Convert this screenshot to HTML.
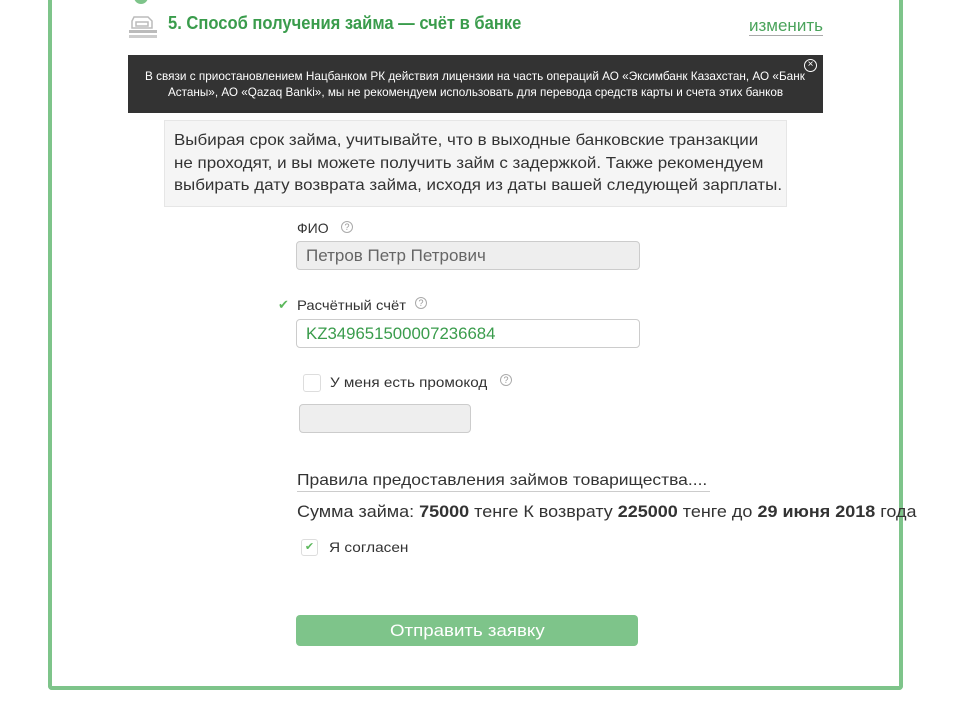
<!DOCTYPE html>
<html><head><meta charset="utf-8"><style>
*{margin:0;padding:0;box-sizing:border-box}
body{width:955px;height:717px;background:#fff;position:relative;overflow:hidden;font-family:"Liberation Sans","DejaVu Sans",sans-serif;color:#333}
.a{position:absolute;white-space:nowrap}
.sx{display:inline-block;transform-origin:0 50%}
.frame{position:absolute;left:48px;top:-10px;width:855px;height:700px;border:4px solid #7ec48a;border-top:none;border-radius:0 0 4px 4px}
.inp{position:absolute;border:1px solid #ccc;border-radius:4px;height:29px;padding-left:9px;line-height:27px}
.q{position:absolute;width:12px;height:12px;border:1px solid #aaa;border-radius:50%;font-size:9px;line-height:10px;text-align:center;color:#999}
</style></head><body>
<div class="frame"></div>
<div class="a" style="left:134px;top:-6px;width:14px;height:10px;background:#7ec48a;border-radius:0 0 7px 7px"></div>
<svg class="a" style="left:128px;top:14px" width="30" height="24" viewBox="0 0 30 24"><path d="M6 3h14l4 4v7H4V7z M8 8h12v4H8z" fill="none" stroke="#bbb" stroke-width="1.5"/><rect x="1" y="16" width="28" height="3" fill="#bbb"/><rect x="1" y="21" width="28" height="3" fill="#ccc"/></svg>
<div class="a" style="left:168px;top:13px;font-size:18px;font-weight:bold;color:#3a9c4c"><span class="sx" style="transform:scaleX(0.92)">5. Способ получения займа — счёт в банке</span></div>
<div class="a" style="left:749px;top:16px;font-size:17px;color:#4aa35b;border-bottom:1px solid #aaa;line-height:19px"><span class="sx">изменить</span></div>
<div class="a" style="left:128px;top:55px;width:695px;height:58px;background:#333"></div>
<div class="a" style="left:145px;top:69px;font-size:12px;color:#fff"><span class="sx" style="transform:scaleX(0.98)">В связи с приостановлением Нацбанком РК действия лицензии на часть операций АО «Эксимбанк Казахстан, АО «Банк</span></div>
<div class="a" style="left:168px;top:85px;font-size:12px;color:#fff"><span class="sx" style="transform:scaleX(0.976)">Астаны», АО «Qazaq Banki», мы не рекомендуем использовать для перевода средств карты и счета этих банков</span></div>
<div class="a" style="left:804px;top:59px;width:13px;height:13px;border:1.5px solid #fff;border-radius:50%;color:#fff;font-size:10px;line-height:10px;text-align:center">×</div>
<div class="a" style="left:164px;top:120px;width:623px;height:87px;background:#f5f5f5;border:1px solid #e6e6e6"></div>
<div class="a" style="left:174px;top:130px;font-size:16px;line-height:22.5px;color:#333"><span class="sx" style="transform:scaleX(1.06)">Выбирая срок займа, учитывайте, что в выходные банковские транзакции<br>не проходят, и вы можете получить займ с задержкой. Также рекомендуем<br>выбирать дату возврата займа, исходя из даты вашей следующей зарплаты.</span></div>
<div class="a" style="left:297px;top:220px;font-size:14px"><span class="sx">ФИО</span></div>
<div class="q" style="left:341px;top:221px">?</div>
<div class="inp" style="left:296px;top:241px;width:344px;background:#eee;color:#666;font-size:17px">Петров Петр Петрович</div>
<div class="a" style="left:278px;top:297px;font-size:13px;color:#5cb85c">✔</div>
<div class="a" style="left:297px;top:297px;font-size:14px"><span class="sx" style="transform:scaleX(1.06)">Расчётный счёт</span></div>
<div class="q" style="left:415px;top:297px">?</div>
<div class="inp" style="left:296px;top:319px;width:344px;background:#fff;color:#3a9c4c;font-size:16.8px">KZ349651500007236684</div>
<div class="a" style="left:303px;top:374px;width:18px;height:18px;border:1px solid #ddd;border-radius:3px"></div>
<div class="a" style="left:330px;top:374px;font-size:14px"><span class="sx" style="transform:scaleX(1.09)">У меня есть промокод</span></div>
<div class="q" style="left:500px;top:374px">?</div>
<div class="inp" style="left:299px;top:404px;width:172px;background:#eee"></div>
<div class="a" style="left:297px;top:470px;font-size:16px;border-bottom:1px solid #ccc;line-height:21px;width:413px"><span class="sx" style="transform:scaleX(1.09)">Правила предоставления займов товарищества....</span></div>
<div class="a" style="left:297px;top:503px;font-size:16.5px"><span class="sx" style="transform:scaleX(1.09)">Сумма займа: <b>75000</b> тенге К возврату <b>225000</b> тенге до <b>29 июня 2018</b> года</span></div>
<div class="a" style="left:301px;top:539px;width:17px;height:17px;border:1px solid #ddd;border-radius:3px;color:#5cb85c;font-size:11px;text-align:center;line-height:15px">✔</div>
<div class="a" style="left:329px;top:539px;font-size:14px"><span class="sx" style="transform:scaleX(1.1)">Я согласен</span></div>
<div class="a" style="left:296px;top:615px;width:342px;height:31px;background:#7ec48a;border-radius:4px;color:#fff;font-size:17px;text-align:center;line-height:31px"><span class="sx" style="transform:scaleX(1.1);transform-origin:50% 50%">Отправить заявку</span></div>
</body></html>
